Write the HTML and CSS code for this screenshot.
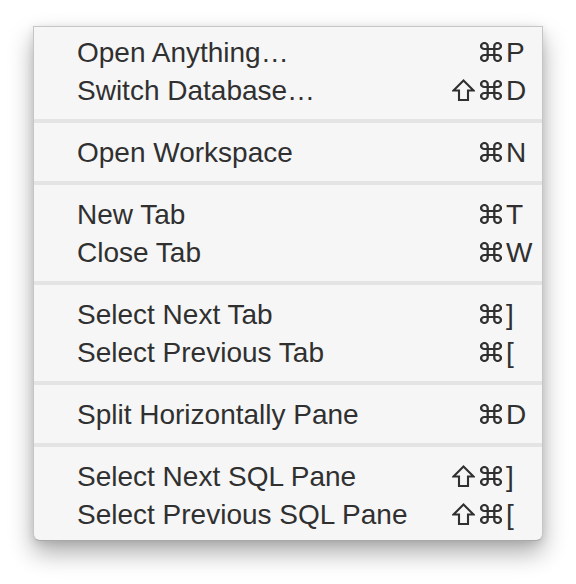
FILE: index.html
```html
<!DOCTYPE html>
<html>
<head>
<meta charset="utf-8">
<link rel="stylesheet" href="styles.css">
</head>
<body>
<div class="menu">
  <div class="item"><span class="label">Open Anything…</span><span class="mods"><svg class="cmd" viewBox="2 2 20 20" preserveAspectRatio="none"><path d="M15 6v12a3 3 0 1 0 3-3H6a3 3 0 1 0 3 3V6a3 3 0 1 0-3 3h12a3 3 0 1 0-3-3"/></svg></span><span class="key">P</span></div>
  <div class="item"><span class="label">Switch Database…</span><span class="mods"><svg class="shift" viewBox="0 0 23 22"><path d="M11.5 1.5 L21.5 11.5 H16 V21 H7 V11.5 H1.5 Z"/></svg><svg class="cmd" viewBox="2 2 20 20" preserveAspectRatio="none"><path d="M15 6v12a3 3 0 1 0 3-3H6a3 3 0 1 0 3 3V6a3 3 0 1 0-3 3h12a3 3 0 1 0-3-3"/></svg></span><span class="key">D</span></div>
  <div class="sep"></div>
  <div class="item"><span class="label">Open Workspace</span><span class="mods"><svg class="cmd" viewBox="2 2 20 20" preserveAspectRatio="none"><path d="M15 6v12a3 3 0 1 0 3-3H6a3 3 0 1 0 3 3V6a3 3 0 1 0-3 3h12a3 3 0 1 0-3-3"/></svg></span><span class="key">N</span></div>
  <div class="sep"></div>
  <div class="item"><span class="label">New Tab</span><span class="mods"><svg class="cmd" viewBox="2 2 20 20" preserveAspectRatio="none"><path d="M15 6v12a3 3 0 1 0 3-3H6a3 3 0 1 0 3 3V6a3 3 0 1 0-3 3h12a3 3 0 1 0-3-3"/></svg></span><span class="key">T</span></div>
  <div class="item"><span class="label">Close Tab</span><span class="mods"><svg class="cmd" viewBox="2 2 20 20" preserveAspectRatio="none"><path d="M15 6v12a3 3 0 1 0 3-3H6a3 3 0 1 0 3 3V6a3 3 0 1 0-3 3h12a3 3 0 1 0-3-3"/></svg></span><span class="key">W</span></div>
  <div class="sep"></div>
  <div class="item"><span class="label">Select Next Tab</span><span class="mods"><svg class="cmd" viewBox="2 2 20 20" preserveAspectRatio="none"><path d="M15 6v12a3 3 0 1 0 3-3H6a3 3 0 1 0 3 3V6a3 3 0 1 0-3 3h12a3 3 0 1 0-3-3"/></svg></span><span class="key">]</span></div>
  <div class="item"><span class="label">Select Previous Tab</span><span class="mods"><svg class="cmd" viewBox="2 2 20 20" preserveAspectRatio="none"><path d="M15 6v12a3 3 0 1 0 3-3H6a3 3 0 1 0 3 3V6a3 3 0 1 0-3 3h12a3 3 0 1 0-3-3"/></svg></span><span class="key">[</span></div>
  <div class="sep"></div>
  <div class="item"><span class="label">Split Horizontally Pane</span><span class="mods"><svg class="cmd" viewBox="2 2 20 20" preserveAspectRatio="none"><path d="M15 6v12a3 3 0 1 0 3-3H6a3 3 0 1 0 3 3V6a3 3 0 1 0-3 3h12a3 3 0 1 0-3-3"/></svg></span><span class="key">D</span></div>
  <div class="sep"></div>
  <div class="item"><span class="label">Select Next SQL Pane</span><span class="mods"><svg class="shift" viewBox="0 0 23 22"><path d="M11.5 1.5 L21.5 11.5 H16 V21 H7 V11.5 H1.5 Z"/></svg><svg class="cmd" viewBox="2 2 20 20" preserveAspectRatio="none"><path d="M15 6v12a3 3 0 1 0 3-3H6a3 3 0 1 0 3 3V6a3 3 0 1 0-3 3h12a3 3 0 1 0-3-3"/></svg></span><span class="key">]</span></div>
  <div class="item"><span class="label">Select Previous SQL Pane</span><span class="mods"><svg class="shift" viewBox="0 0 23 22"><path d="M11.5 1.5 L21.5 11.5 H16 V21 H7 V11.5 H1.5 Z"/></svg><svg class="cmd" viewBox="2 2 20 20" preserveAspectRatio="none"><path d="M15 6v12a3 3 0 1 0 3-3H6a3 3 0 1 0 3 3V6a3 3 0 1 0-3 3h12a3 3 0 1 0-3-3"/></svg></span><span class="key">[</span></div>
</div>
</body>
</html>
```
FILE: styles.css
```css
html, body {
  margin: 0;
  padding: 0;
  background: #ffffff;
}
body {
  padding: 26px 0 40px 33px;
  font-family: "Liberation Sans", Arial, sans-serif;
  color: #303030;
}
.menu {
  box-sizing: border-box;
  width: 510px;
  background: #f6f6f6;
  border: 1px solid #c6c6c6;
  border-bottom-color: #a9a9a9;
  border-radius: 0 0 7px 7px;
  padding: 6px 0 7px 0;
  box-shadow: 0 12px 24px rgba(0, 0, 0, 0.32), 0 2px 8px rgba(0, 0, 0, 0.1);
}
.item {
  display: grid;
  grid-template-columns: 1fr auto 36px;
  column-gap: 4px;
  align-items: center;
  height: 38px;
  box-sizing: border-box;
  padding-left: 43px;
}
.label, .key {
  font-size: 28px;
  line-height: 36px;
  padding-top: 2px;
  white-space: nowrap;
}
.mods {
  display: flex;
  align-items: center;
  justify-content: flex-end;
  gap: 5px;
}
.mods svg {
  display: block;
  fill: none;
  stroke: #303030;
}
.cmd {
  width: 22px;
  height: 20px;
  stroke-width: 2.1;
}
.shift {
  width: 23px;
  height: 22px;
  stroke-width: 2.1;
  stroke-linejoin: miter;
}
.sep {
  height: 4px;
  background: #e4e4e4;
  margin: 10px 0;
}
```
